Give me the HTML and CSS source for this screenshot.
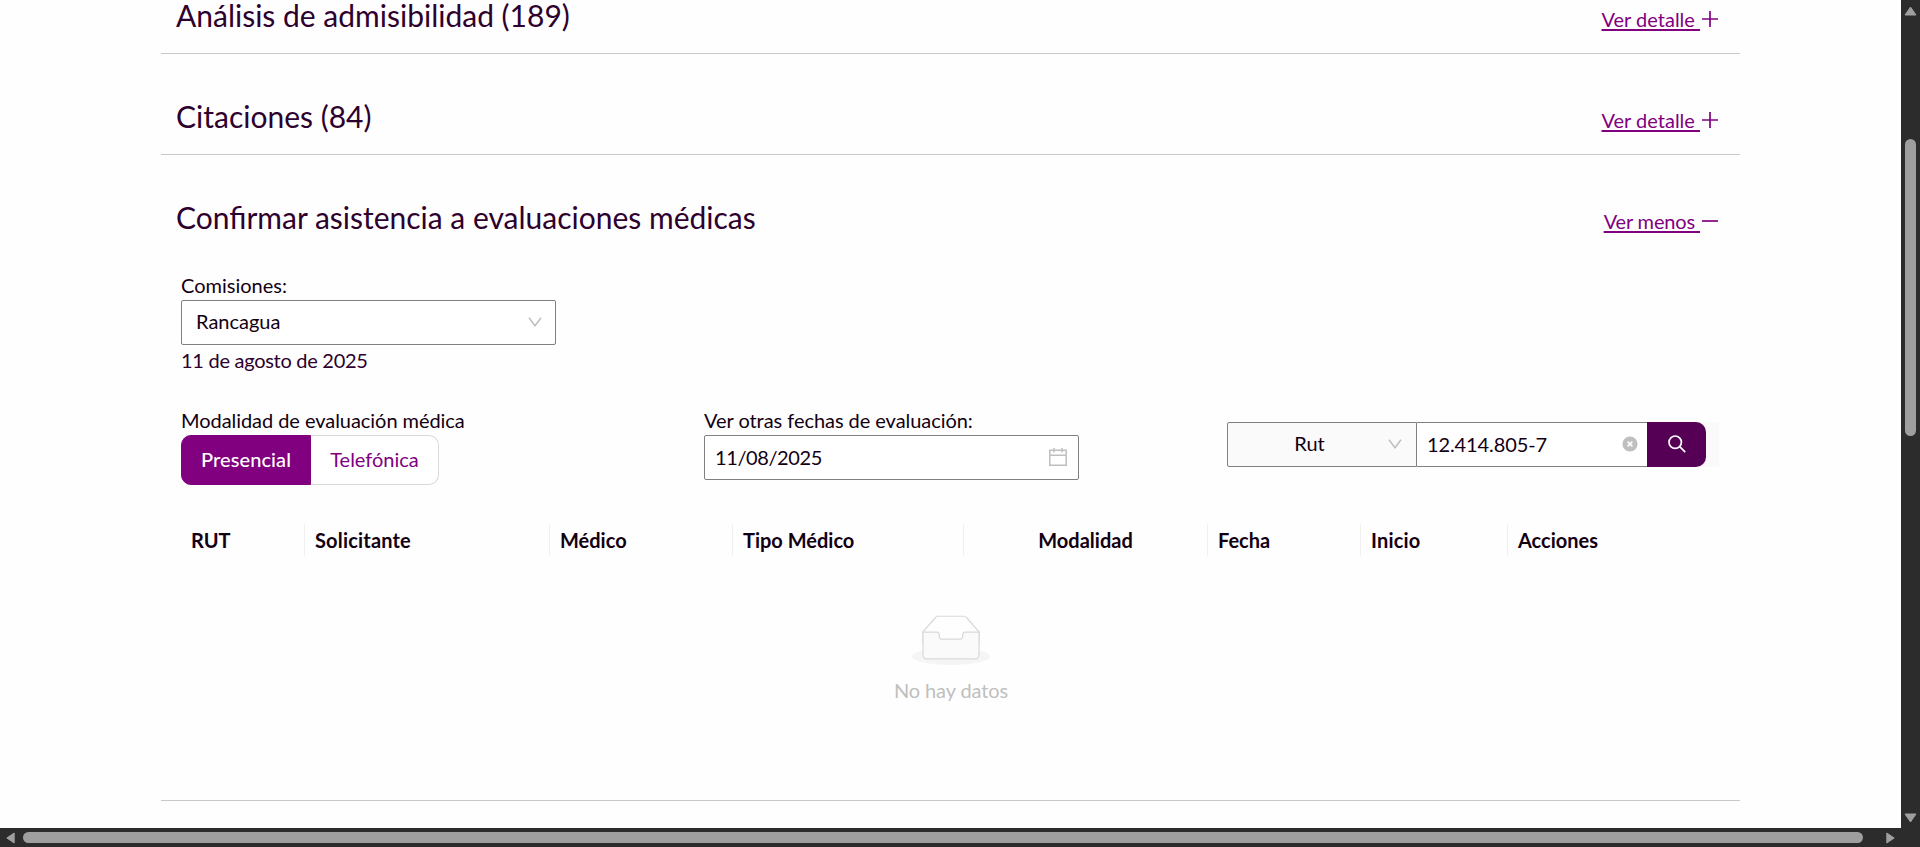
FILE: index.html
```html
<!DOCTYPE html>
<html lang="es">
<head>
<meta charset="utf-8">
<title>Evaluaciones médicas</title>
<link rel="stylesheet" href="styles.css">
</head>
<body>
<div class="window">
  <main class="page">
    <div class="content">
      <section class="panel">
        <div class="panel-head">
          <h2 class="title">Análisis de admisibilidad (189)</h2>
          <a class="toggle"><span class="toggle-text">Ver detalle&nbsp;</span><svg class="toggle-icon" viewBox="0 0 16 16"><path d="M0 8h16M8 0v16"/></svg></a>
        </div>
      </section>
      <section class="panel">
        <div class="panel-head">
          <h2 class="title">Citaciones (84)</h2>
          <a class="toggle"><span class="toggle-text">Ver detalle&nbsp;</span><svg class="toggle-icon" viewBox="0 0 16 16"><path d="M0 8h16M8 0v16"/></svg></a>
        </div>
      </section>
      <section class="panel panel-open">
        <div class="panel-head">
          <h2 class="title">Confirmar asistencia a evaluaciones médicas</h2>
          <a class="toggle"><span class="toggle-text less">Ver menos&nbsp;</span><svg class="toggle-icon" viewBox="0 0 16 16"><path d="M0 8h16"/></svg></a>
        </div>
        <div class="panel-body">
          <div class="label">Comisiones:</div>
          <div class="box select">
            <span>Rancagua</span>
            <svg class="chevron" viewBox="0 0 14 10"><path d="M1 .8l6 8 6-8"/></svg>
          </div>
          <div class="date-text">11 de agosto de 2025</div>
          <div class="filters">
            <div class="filter-col">
              <div class="label tight">Modalidad de evaluación médica</div>
              <div class="radio-group"><span class="radio active">Presencial</span><span class="radio">Telefónica</span></div>
            </div>
            <div class="filter-col">
              <div class="label tight">Ver otras fechas de evaluación:</div>
              <div class="box picker">
                <span class="picker-value">11/08/2025</span>
                <svg class="calendar" viewBox="0 0 18 18"><path d="M.8 2.2h16.4v15H.8zM.8 7.2h16.4M5 0v4.4M13 0v4.4"/></svg>
              </div>
            </div>
            <div class="search">
              <div class="search-type">
                <span class="search-type-text">Rut</span>
                <svg class="chevron" viewBox="0 0 14 10"><path d="M1 .8l6 8 6-8"/></svg>
              </div>
              <div class="search-input">
                <span class="search-value">12.414.805-7</span>
                <svg class="clear" viewBox="0 0 16 16"><circle cx="8" cy="8" r="7.6"/><path d="M5.6 5.6l4.8 4.8M10.400 5.600l-4.800 4.800"/></svg>
              </div>
              <div class="search-button">
                <svg class="lens" viewBox="0 0 18 18"><circle cx="7.200" cy="7.200" r="6.200"/><path d="M11.700 11.700l5.500 5.500"/></svg>
              </div>
            </div>
          </div>
          <div class="table-head">
            <span class="th">RUT</span>
            <span class="th spaced">Solicitante</span>
            <span class="th">Médico</span>
            <span class="th">Tipo Médico</span>
            <span class="th centered">Modalidad</span>
            <span class="th">Fecha</span>
            <span class="th spaced">Inicio</span>
            <span class="th">Acciones</span>
          </div>
          <div class="empty">
            <svg class="empty-image" viewBox="0 0 64 41"><g transform="translate(0 1)" fill="none" fill-rule="evenodd"><ellipse fill="#f5f5f5" cx="32" cy="33" rx="32" ry="7"/><g stroke="#d9d9d9" fill-rule="nonzero"><path d="M55 12.760L44.854 1.258C44.367.474 43.656 0 42.907 0H21.093c-.749 0-1.460.474-1.947 1.257L9 12.761V22h46v-9.240z"/><path fill="#fafafa" d="M41.613 15.931c0-1.605.994-2.930 2.227-2.931H55v18.137C55 33.260 53.680 35 52.050 35h-40.100C10.320 35 9 33.259 9 31.137V13h11.160c1.233 0 2.227 1.323 2.227 2.928v.022c0 1.605 1.005 2.901 2.237 2.901h14.752c1.232 0 2.237-1.308 2.237-2.913v-.007z"/></g></g></svg>
            <div class="empty-text">No hay datos</div>
          </div>
        </div>
      </section>
    </div>
  </main>
  <div class="vbar">
    <svg class="arrow-v" viewBox="0 0 13 10"><path d="M6.500 1l5.500 8H1z"/></svg>
    <div class="vtrack"><div class="vthumb"></div></div>
    <svg class="arrow-v" viewBox="0 0 13 10"><path d="M6.500 9L12 1H1z"/></svg>
  </div>
  <div class="hbar">
    <svg class="arrow-h" viewBox="0 0 9 12"><path d="M.8 6L8.200 1v10z"/></svg>
    <div class="hthumb"></div>
    <svg class="arrow-h" viewBox="0 0 9 12"><path d="M8.200 6L.8 1v10z"/></svg>
  </div>
</div>
</body>
</html>
```
FILE: styles.css
```css
* { box-sizing: border-box; }
body {
  margin: 0;
  overflow: hidden;
  background: #fff;
  color: #120012;
  font: 20px/24px Lato, "Liberation Sans", sans-serif;
}
svg { display: block; flex: none; fill: none; }
.window {
  display: grid;
  grid-template-columns: 1901px 19px;
  grid-template-rows: 828px 19px;
  width: 1920px;
  height: 847px;
}
.page { overflow: hidden; background: #fefefe; }
.content { width: 1579px; margin: -47px 0 0 161px; }
.panel { border-bottom: 1px solid #c8c8c8; height: 101px; padding-top: 44px; }
.panel-open { height: 646px; }
.panel-head {
  display: flex;
  justify-content: space-between;
  align-items: baseline;
  height: 36px;
  padding: 0 22px 0 15px;
}
.title { margin: 0; font-size: 30px; line-height: 36px; font-weight: 400; color: #2d002d; }
.toggle { display: flex; align-items: center; gap: 2px; color: #800080; }
.toggle-text { text-decoration: underline; text-decoration-thickness: 2px; text-underline-offset: 2px; }
.less { letter-spacing: -.15px; }
.toggle-icon { width: 16px; height: 16px; stroke: #800080; stroke-width: 1.700; }

.panel-body { padding: 38px 21px 0 20px; }
.label { height: 27px; }
.tight { letter-spacing: -.05px; }
.box {
  display: flex;
  align-items: center;
  justify-content: space-between;
  width: 375px;
  height: 45px;
  border: 1px solid #808080;
  border-radius: 2px;
  background: #fff;
}
.select { padding: 0 13px 3px 14px; }
.chevron { width: 14px; height: 10px; margin-top: 1px; stroke: #bfbfbf; stroke-width: 1.500; }
.date-text { margin-top: 3px; color: #2d002d; letter-spacing: -.28px; }
.filters { display: flex; height: 77px; margin-top: 36px; }
.filter-col { width: 523px; }
.radio-group { display: flex; height: 50px; }
.radio {
  width: 128px;
  line-height: 46px;
  text-align: center;
  color: #800080;
  background: #fff;
  border: 1px solid #d9d9d9;
  border-left: 0;
  border-radius: 0 10px 10px 0;
}
.radio.active {
  width: 130px;
  color: #fff;
  background: #800080;
  border: 1px solid #800080;
  border-radius: 10px 0 0 10px;
  font-weight: 500;
  letter-spacing: .1px;
}
.picker { padding: 0 11px 2px 10px; }
.picker-value { letter-spacing: -.4px; }
.calendar { width: 18px; height: 18px; stroke: #bfbfbf; stroke-width: 1.500; }

.search {
  display: flex;
  width: 492px;
  height: 45px;
  margin-top: 14px;
  background: #fafafa;
  border-radius: 2px;
}
.search-type {
  display: flex;
  align-items: center;
  width: 190px;
  border: 1px solid #808080;
  border-radius: 2px 0 0 2px;
  padding: 0 14px 3px 0;
}
.search-type-text { flex: 1; padding-left: 3px; text-align: center; }
.search-input {
  display: flex;
  align-items: center;
  justify-content: space-between;
  width: 230px;
  padding: 0 9px 1px 10px;
  background: #fff;
  border: solid #808080;
  border-width: 1px 0;
}
.search-value { letter-spacing: -.1px; }
.clear { width: 16px; height: 16px; }
.clear circle { fill: #bfbfbf; }
.clear path { stroke: #fff; stroke-width: 1.500; }
.search-button {
  display: flex;
  align-items: center;
  justify-content: center;
  width: 59px;
  padding-bottom: 1px;
  background: #550055;
  border-radius: 0 10px 10px 0;
}
.lens { width: 18px; height: 18px; stroke: #fff; stroke-width: 1.700; }

.table-head {
  display: grid;
  grid-template-columns: 124px 245px 183px 231px 244px 153px 147px 211px;
  height: 32px;
  margin-top: 39px;
}
.th { padding-left: 10px; line-height: 32px; font-weight: 700; border-right: 1px solid #f0f0f0; }
.th:last-child { border-right: 0; }
.spaced { letter-spacing: .18px; }
.centered { padding: 0; text-align: center; }
.empty {
  display: flex;
  flex-direction: column;
  align-items: center;
  margin-top: 59px;
  padding-left: 2px;
  color: #bfbfbf;
}
.empty-image { width: 78px; height: 50px; }
.empty-text { margin-top: 13px; letter-spacing: -.1px; }

.vbar {
  display: flex;
  flex-direction: column;
  align-items: center;
  padding: 6px 0 5px;
  background: #2c2c2c;
}
.arrow-v { width: 13px; height: 10px; }
.arrow-v path, .arrow-h path { fill: #9f9f9f; stroke: #9f9f9f; stroke-width: 1; stroke-linejoin: round; }
.vtrack { flex: 1; padding-top: 123px; }
.vthumb { width: 11px; height: 297px; border-radius: 6px; background: #9f9f9f; }
.hbar {
  grid-column: 1 / 3;
  display: flex;
  align-items: center;
  padding-left: 6px;
  background: #2c2c2c;
}
.arrow-h { width: 9px; height: 12px; }
.hthumb { width: 1840px; height: 11px; margin: 0 23px 0 8px; border-radius: 6px; background: #9f9f9f; }
```
